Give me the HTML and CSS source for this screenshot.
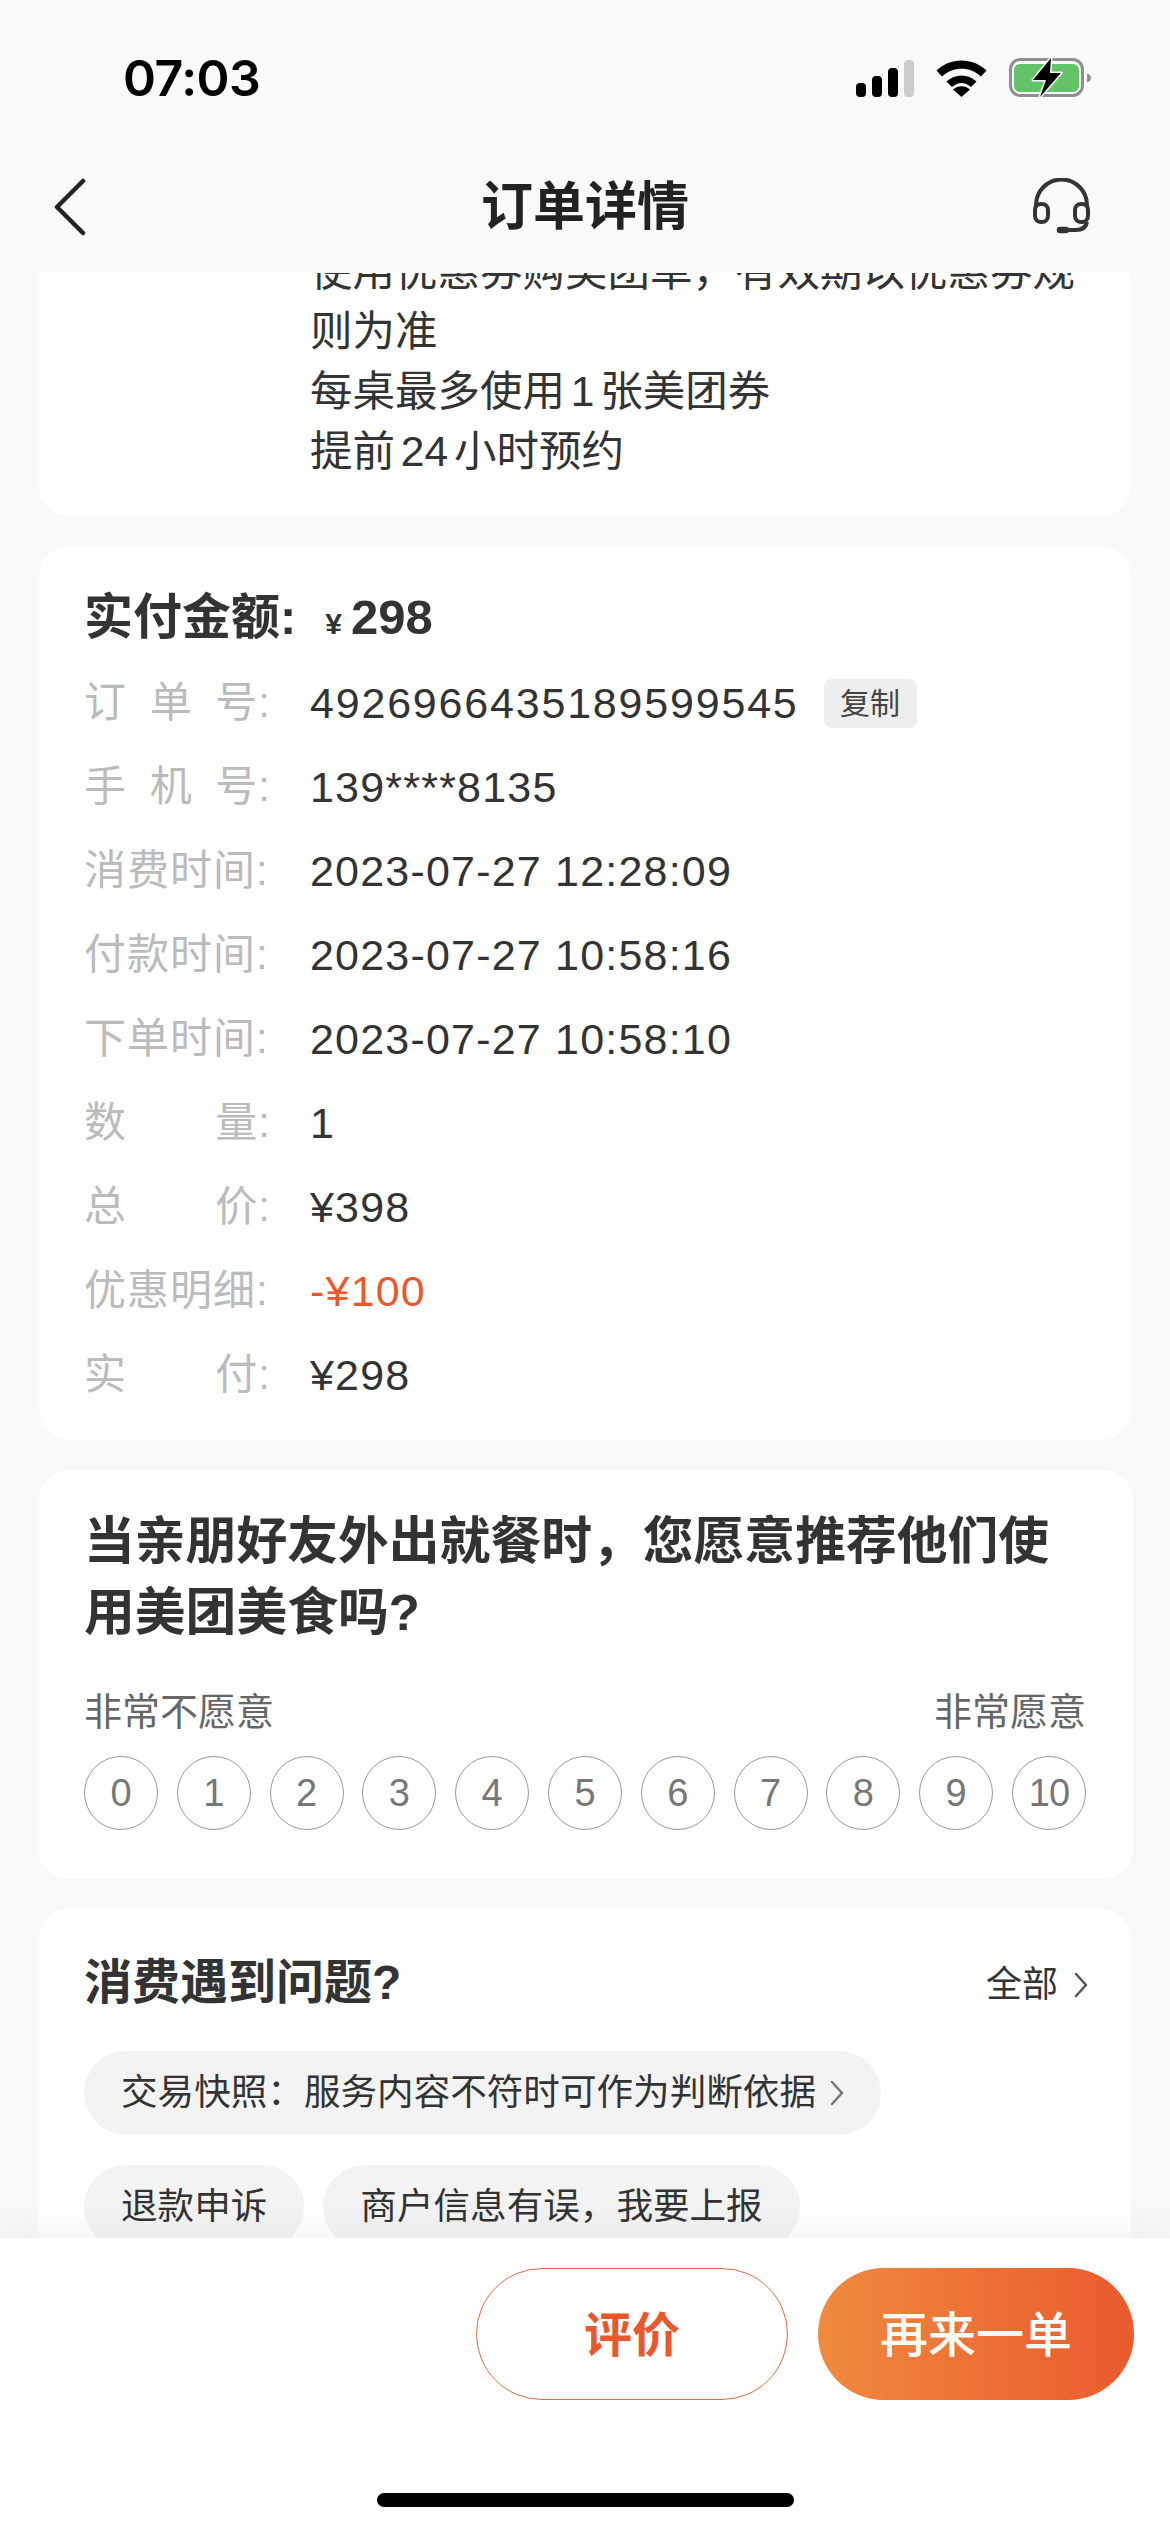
FILE: index.html
```html
<!DOCTYPE html>
<html lang="zh-CN">
<head>
  <meta charset="UTF-8" />
  <meta name="viewport" content="width=device-width, initial-scale=1.0"/>
  <title>订单详情</title>
  <link rel="stylesheet" href="styles.css">
</head>
<body>
  <div class="page">

    <!-- Status bar -->
    <div class="status-bar">
      <span class="time">07:03</span>
      <div class="status-icons">
        <svg class="icon-signal" viewBox="0 0 58 37">
          <rect x="0" y="23" width="10" height="14" rx="4" fill="#000"/>
          <rect x="16" y="16" width="10" height="21" rx="4" fill="#000"/>
          <rect x="32" y="8" width="10" height="29" rx="4" fill="#000"/>
          <rect x="48" y="0" width="10" height="37" rx="4" fill="#ccc"/>
        </svg>
        <svg class="icon-wifi" viewBox="0 0 51 37">
          <path d="M0.5 10.5C14 -3 37 -3 50.5 10.5L45 16.5C34 6 17 6 6 16.5Z" fill="#000"/>
          <path d="M10.5 21.5C19 13.5 32 13.5 40.500 21.500L35 27C28.500 21.500 22.500 21.500 16 27Z" fill="#000"/>
          <path d="M25.500 37L17 29.500C22 25 29 25 34 29.500Z" fill="#000"/>
        </svg>
        <svg class="icon-battery" viewBox="0 0 82 40">
          <rect x="1.500" y="1.500" width="72" height="36" rx="10" fill="none" stroke="#8f8f8f" stroke-width="3"/>
          <rect x="5" y="6" width="65" height="28" rx="6" fill="#62c466"/>
          <path d="M78 15.500C80.500 16 82 18 82 20C82 22 80.500 24 78 24.500Z" fill="#8f8f8f"/>
          <path d="M42 0L24 22H37L31 39L52 15H41Z" fill="#000" stroke="#f9f9f9" stroke-width="3" paint-order="stroke" stroke-linejoin="round"/>
        </svg>
      </div>
    </div>

    <!-- Nav bar -->
    <div class="nav-bar">
      <svg class="icon-back" viewBox="0 0 33 58">
        <path d="M30 3L4 29L30 55" fill="none" stroke="#222" stroke-width="4.500" stroke-linecap="round" stroke-linejoin="round"/>
      </svg>
      <div class="nav-title">订单详情</div>
      <svg class="icon-headset" viewBox="0 0 59 58">
        <path d="M4 28V27A25.500 25.500 0 0 1 55 27V28" fill="none" stroke="#333" stroke-width="4"/>
        <rect x="3" y="26" width="13" height="18" rx="6" fill="none" stroke="#333" stroke-width="4"/>
        <rect x="43" y="26" width="13" height="18" rx="6" fill="none" stroke="#333" stroke-width="4"/>
        <path d="M55 44C54 49 50 52 44 52H32" fill="none" stroke="#333" stroke-width="4"/>
        <path d="M28 52H34" fill="none" stroke="#333" stroke-width="6.500" stroke-linecap="round"/>
      </svg>
    </div>

    <!-- Scrolled content -->
    <div class="content">

      <div class="card card-rules">
        <p>使用优惠券购美团单，有效期以优惠券规则为准</p>
        <p>每桌最多使用 1 张美团券</p>
        <p>提前 24 小时预约</p>
      </div>

      <div class="card card-order">
        <div class="paid-title">实付金额: <span class="yen">¥</span><span class="paid-num">298</span></div>
        <div class="row"><span class="label"><span>订</span><span>单</span><span>号:</span></span><span class="value order-num">4926966435189599545</span><span class="copy">复制</span></div>
        <div class="row"><span class="label"><span>手</span><span>机</span><span>号:</span></span><span class="value">139****8135</span></div>
        <div class="row"><span class="label"><span>消费时间:</span></span><span class="value">2023-07-27 12:28:09</span></div>
        <div class="row"><span class="label"><span>付款时间:</span></span><span class="value">2023-07-27 10:58:16</span></div>
        <div class="row"><span class="label"><span>下单时间:</span></span><span class="value">2023-07-27 10:58:10</span></div>
        <div class="row"><span class="label"><span>数</span><span>量:</span></span><span class="value">1</span></div>
        <div class="row"><span class="label"><span>总</span><span>价:</span></span><span class="value">¥398</span></div>
        <div class="row"><span class="label"><span>优惠明细:</span></span><span class="value discount">-¥100</span></div>
        <div class="row"><span class="label"><span>实</span><span>付:</span></span><span class="value">¥298</span></div>
      </div>

      <div class="card card-rating">
        <div class="rating-title">当亲朋好友外出就餐时，您愿意推荐他们使用美团美食吗?</div>
        <div class="rating-labels">
          <span>非常不愿意</span>
          <span>非常愿意</span>
        </div>
        <div class="scores">
          <div class="score">0</div>
          <div class="score">1</div>
          <div class="score">2</div>
          <div class="score">3</div>
          <div class="score">4</div>
          <div class="score">5</div>
          <div class="score">6</div>
          <div class="score">7</div>
          <div class="score">8</div>
          <div class="score">9</div>
          <div class="score score-ten">10</div>
        </div>
      </div>

      <div class="card card-help">
        <div class="help-head">
          <span class="help-title">消费遇到问题?</span>
          <span class="help-all">全部
            <svg class="chevron" viewBox="0 0 14 26"><path d="M2 2L12 13L2 24" fill="none" stroke="#555" stroke-width="2.500" stroke-linecap="round" stroke-linejoin="round"/></svg>
          </span>
        </div>
        <div class="chips">
          <div class="chip">交易快照：服务内容不符时可作为判断依据
            <svg class="chevron chip-chevron" viewBox="0 0 14 26"><path d="M2 2L12 13L2 24" fill="none" stroke="#777" stroke-width="2.500" stroke-linecap="round" stroke-linejoin="round"/></svg>
          </div>
          <div class="chip">退款申诉</div>
          <div class="chip">商户信息有误，我要上报</div>
        </div>
      </div>

    </div>

    <!-- Bottom actions -->
    <div class="bottom-bar">
      <div class="actions">
        <a class="btn btn-outline">评价</a>
        <a class="btn btn-fill">再来一单</a>
      </div>
      <div class="home-indicator"></div>
    </div>

  </div>
</body>
</html>
```

FILE: styles.css
```css
* {
  box-sizing: border-box;
}

body {
  margin: 0;
  padding: 0;
  background: #f9f9f9;
  color: #333;
  font-family: "Liberation Sans", "Noto Sans CJK SC", sans-serif;
}

.page {
  width: 1170px;
  height: 2532px;
  display: flex;
  flex-direction: column;
  overflow: hidden;
}

/* Status bar */
.status-bar {
  height: 156px;
  flex: none;
  display: flex;
  justify-content: space-between;
  align-items: center;
  padding: 0 79px 0 123px;
}

.time {
  font-family: Inter, sans-serif;
  font-size: 50px;
  font-weight: 600;
  line-height: 60px;
  color: #000;
  letter-spacing: -0.5px;
}

.status-icons {
  display: flex;
  align-items: center;
  gap: 22px;
}

.icon-signal {
  width: 58px;
  height: 37px;
}

.icon-wifi {
  width: 51px;
  height: 37px;
}

.icon-battery {
  width: 82px;
  height: 40px;
}

/* Nav bar */
.nav-bar {
  height: 117px;
  flex: none;
  display: grid;
  grid-template-columns: 1fr auto 1fr;
  align-items: center;
  padding: 0 53px 15px;
}

.icon-back {
  width: 33px;
  height: 58px;
}

.nav-title {
  font-size: 52px;
  font-weight: 700;
  line-height: 60px;
  color: #222;
}

.icon-headset {
  width: 59px;
  height: 58px;
  justify-self: end;
  margin-right: 26px;
}

/* Cards */
.content {
  flex: 1;
  min-height: 0;
  overflow: hidden;
  display: flex;
  flex-direction: column;
  gap: 30px;
}

.card {
  flex: none;
  background: #fff;
  border-radius: 30px;
  margin: 0 39px;
}

.card-rules {
  margin-top: -31px;
  padding: 0 40px 34px 271px;
  font-size: 42.5px;
  line-height: 60px;
  word-spacing: -6px;
}

.card-rules p {
  margin: 0;
}

.card-order {
  padding: 46px 45px 23px;
}

.paid-title {
  display: flex;
  align-items: baseline;
  height: 50px;
  font-size: 49px;
  font-weight: 700;
  line-height: 50px;
  margin-bottom: 19px;
}

.yen {
  font-size: 30px;
  margin: 0 9px 0 29px;
}

.row {
  display: flex;
  align-items: center;
  height: 84px;
}

.label {
  display: flex;
  justify-content: space-between;
  flex: none;
  width: 187px;
  margin-right: 39px;
  font-size: 42px;
  line-height: 60px;
  letter-spacing: 1px;
  white-space: nowrap;
  color: #bbb;
}

.value {
  font-size: 43px;
  line-height: 60px;
  letter-spacing: 1.2px;
  color: #333;
}

.order-num {
  letter-spacing: 1.8px;
}

.discount {
  color: #e8582c;
}

.copy {
  width: 93px;
  height: 49px;
  margin-left: 25px;
  background: #eee;
  border-radius: 8px;
  font-size: 30px;
  line-height: 49px;
  text-align: center;
  color: #444;
}

.card-rating {
  margin: 0 37px 0 38px;
  padding: 36px 47px 49px 46px;
  box-shadow: 0 0 24px rgba(0, 0, 0, 0.012);
}

.rating-title {
  font-size: 50.800px;
  font-weight: 700;
  line-height: 71px;
}

.rating-labels {
  display: flex;
  justify-content: space-between;
  margin-top: 39px;
  font-size: 38px;
  line-height: 50px;
  color: #666;
}

.scores {
  display: flex;
  justify-content: space-between;
  margin-top: 19px;
}

.score {
  width: 74px;
  height: 74px;
  border: 1.500px solid #999;
  border-radius: 50%;
  display: flex;
  justify-content: center;
  align-items: center;
  font-size: 38px;
  color: #777;
}

.score-ten {
  letter-spacing: -1px;
}

.card-help {
  padding: 44px 45px 40px;
}

.help-head {
  display: flex;
  justify-content: space-between;
  align-items: center;
  height: 60px;
}

.help-title {
  font-size: 48px;
  font-weight: 700;
  line-height: 60px;
}

.help-all {
  display: flex;
  align-items: center;
  gap: 16px;
  padding-top: 3px;
  font-size: 36px;
  line-height: 50px;
  margin-right: -2px;
}

.chevron {
  width: 14px;
  height: 26px;
}

.chips {
  display: flex;
  flex-wrap: wrap;
  gap: 30px 19px;
  margin-top: 38px;
}

.chip {
  display: flex;
  align-items: center;
  height: 84px;
  padding: 0 37px;
  background: #f3f3f3;
  border-radius: 42px;
  font-size: 36.600px;
  line-height: 50px;
  color: #333;
}

.chip-chevron {
  margin-left: 14px;
}

/* Bottom actions */
.bottom-bar {
  position: relative;
  flex: none;
  height: 294px;
  background: #fff;
  box-shadow: 0 -6px 40px rgba(0, 0, 0, 0.05);
}

.actions {
  display: flex;
  justify-content: flex-end;
  gap: 30px;
  padding: 30px 36px 0 0;
}

.btn {
  height: 132px;
  border-radius: 66px;
  display: flex;
  justify-content: center;
  align-items: center;
  padding-bottom: 6px;
  font-size: 48px;
  font-weight: 500;
}

.btn-outline {
  width: 312px;
  border: 1.500px solid #e06a45;
  color: #e8582c;
  font-weight: 700;
}

.btn-fill {
  width: 316px;
  background: linear-gradient(90deg, #ef8a3e, #ea5a2d);
  color: #fff;
}

.home-indicator {
  width: 417px;
  height: 14px;
  margin: 93px auto 0;
  background: #000;
  border-radius: 7px;
}
```
